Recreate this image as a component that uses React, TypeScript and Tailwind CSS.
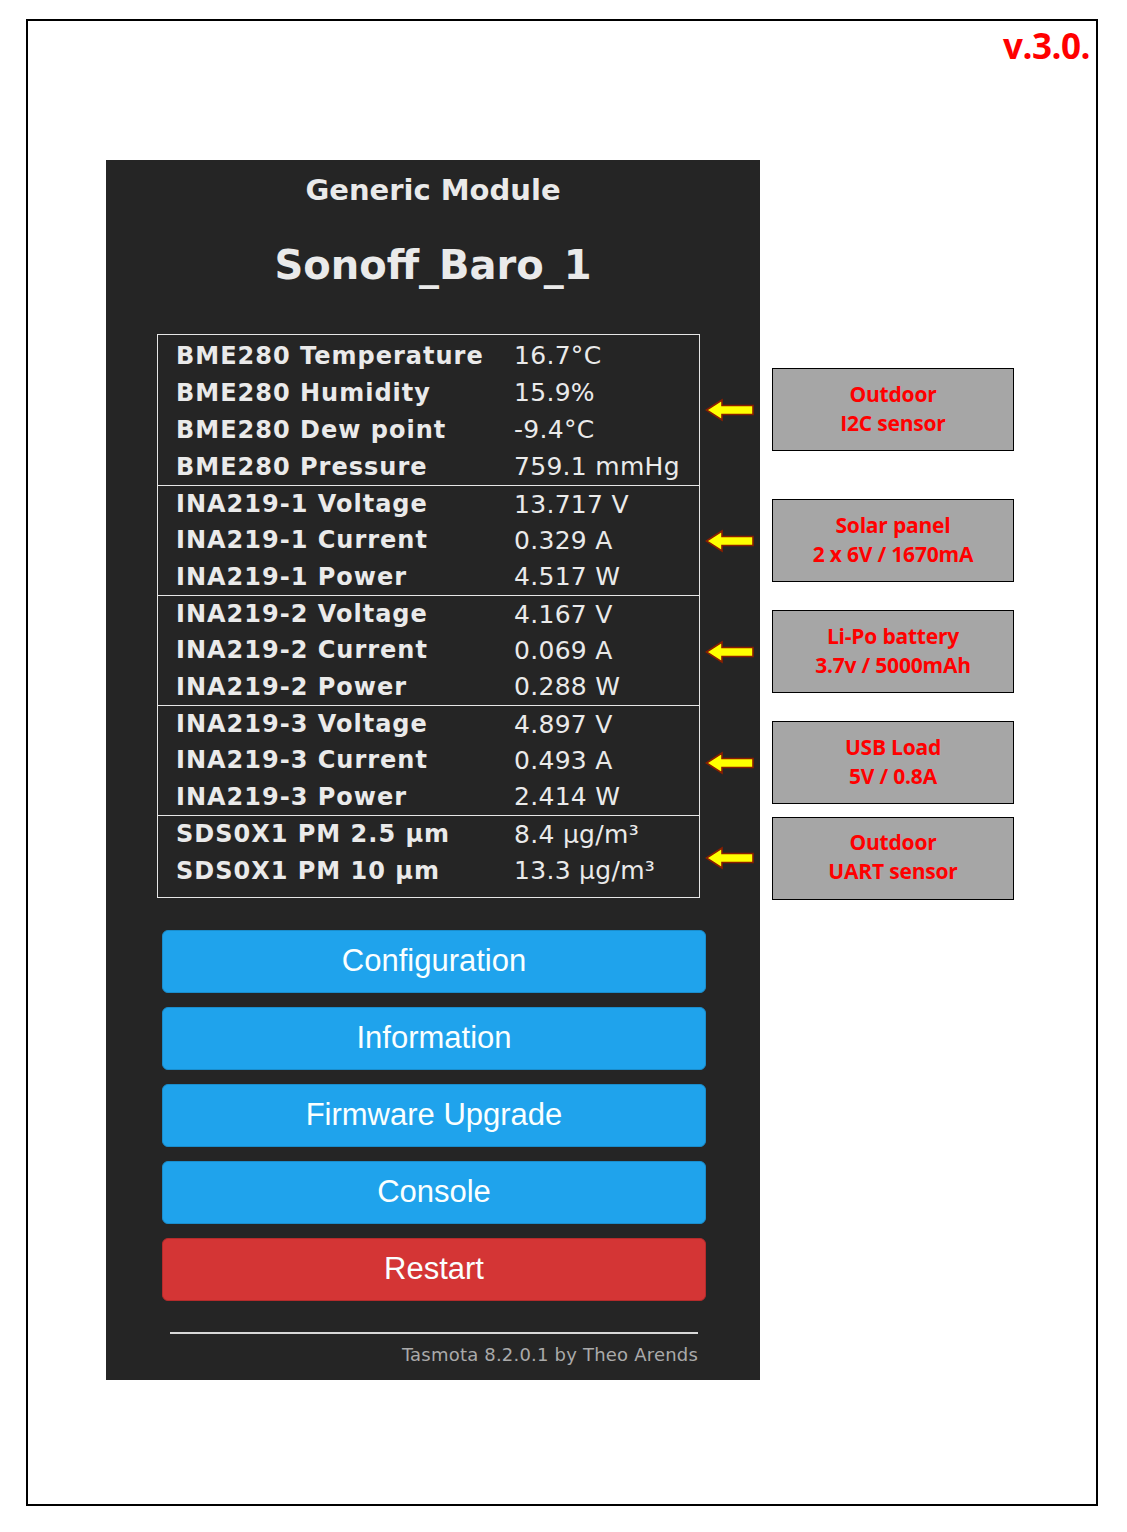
import React from "react";

type Row = [string, string];

const groups: { rows: Row[]; h: number; pad: string }[] = [
  {
    rows: [
      ["BME280 Temperature", "16.7°C"],
      ["BME280 Humidity", "15.9%"],
      ["BME280 Dew point", "-9.4°C"],
      ["BME280 Pressure", "759.1 mmHg"],
    ],
    h: 150,
    pad: "pt-[2px]",
  },
  {
    rows: [
      ["INA219-1 Voltage", "13.717 V"],
      ["INA219-1 Current", "0.329 A"],
      ["INA219-1 Power", "4.517 W"],
    ],
    h: 110,
    pad: "",
  },
  {
    rows: [
      ["INA219-2 Voltage", "4.167 V"],
      ["INA219-2 Current", "0.069 A"],
      ["INA219-2 Power", "0.288 W"],
    ],
    h: 110,
    pad: "",
  },
  {
    rows: [
      ["INA219-3 Voltage", "4.897 V"],
      ["INA219-3 Current", "0.493 A"],
      ["INA219-3 Power", "2.414 W"],
    ],
    h: 110,
    pad: "",
  },
  {
    rows: [
      ["SDS0X1 PM 2.5 µm", "8.4 µg/m³"],
      ["SDS0X1 PM 10 µm", "13.3 µg/m³"],
    ],
    h: 78,
    pad: "pb-[4px]",
  },
];

// slot heights for arrows / notes, matched to the table groups
const slots = [151, 111, 111, 111, 80];

const notes: [string, string][] = [
  ["Outdoor", "I2C sensor"],
  ["Solar panel", "2 x 6V / 1670mA"],
  ["Li-Po battery", "3.7v / 5000mAh"],
  ["USB Load", "5V / 0.8A"],
  ["Outdoor", "UART sensor"],
];

const buttons = [
  { label: "Configuration", red: false },
  { label: "Information", red: false },
  { label: "Firmware Upgrade", red: false },
  { label: "Console", red: false },
  { label: "Restart", red: true },
];

function Arrow() {
  return (
    <svg width="50" height="24" viewBox="0 0 50 24">
      <path
        d="M1.5 12 L17 2 L17 7.5 L48 7.5 L48 16.5 L17 16.5 L17 22 Z"
        fill="#ffff00"
        stroke="#8a1e00"
        strokeWidth="1.6"
        strokeLinejoin="miter"
      />
    </svg>
  );
}

export default function App() {
  return (
    <div className="w-[1127px] h-[1532px] bg-white pt-[19px] pl-[26px]">
      <div className="w-[1072px] h-[1487px] border-2 border-black flex flex-col">
        <div className="h-[139px] flex justify-end pr-[6px]">
          <span
            className="text-[35px] font-bold text-[#ff0000] leading-none mt-[7px] tracking-[-0.5px]"
            style={{ fontFamily: "'Open Sans', sans-serif" }}
          >
            v.3.0.
          </span>
        </div>

        <div className="flex">
          <div className="ml-[78px] w-[654px] h-[1220px] bg-[#252525] flex flex-col text-[#eaeaea]" style={{ fontFamily: "'DejaVu Sans', Verdana, sans-serif" }}>
            <div className="mt-[13px] text-center text-[29px] font-bold leading-[34px]">Generic Module</div>
            <div className="mt-[34px] text-center text-[40px] font-bold leading-[48px]">Sonoff_Baro_1</div>

            <div className="mt-[45px] flex">
              <div className="ml-[51px] w-[543px] border border-[#e6e6e6] flex flex-col">
                {groups.map((g, gi) => (
                  <div
                    key={gi}
                    className={`flex flex-col ${g.pad} ${gi > 0 ? "border-t border-[#e6e6e6]" : ""}`}
                    style={{ height: g.h }}
                  >
                    {g.rows.map(([label, value]) => (
                      <div key={label} className="flex-1 flex items-center pl-[18px] leading-none">
                        <span className="w-[338px] shrink-0 font-bold text-[24px] tracking-[1px] whitespace-nowrap">{label}</span>
                        <span className="text-[25px] tracking-[0.3px] whitespace-nowrap">{value}</span>
                      </div>
                    ))}
                  </div>
                ))}
              </div>
              <div className="ml-[5px] flex flex-col">
                {slots.map((h, i) => (
                  <div key={i} className="flex items-center" style={{ height: h }}>
                    <Arrow />
                  </div>
                ))}
              </div>
            </div>

            <div className="mt-[32px] ml-[56px] w-[544px] flex flex-col gap-[14px]">
              {buttons.map((b) => (
                <div
                  key={b.label}
                  className={`h-[63px] rounded-[6px] flex items-center justify-center text-[31px] text-[#faffff] ${
                    b.red ? "bg-[#d43535] border border-[#b52b2b]" : "bg-[#1fa3ec] border border-[#1a8dcc]"
                  }`}
                  style={{ fontFamily: "'Liberation Sans', Arial, sans-serif" }}
                >
                  {b.label}
                </div>
              ))}
            </div>

            <div className="mt-[31px] ml-[64px] w-[528px] h-[2px] bg-[#d8d8d8]" />
            <div className="ml-[64px] w-[528px] mt-[11px] text-right text-[18px] leading-[20px] tracking-[0.2px] text-[#aaaaaa]">
              Tasmota 8.2.0.1 by Theo Arends
            </div>
          </div>

          <div className="ml-[12px] pt-[174px] flex flex-col" style={{ fontFamily: "'Open Sans', sans-serif" }}>
            {slots.map((h, i) => (
              <div key={i} className="flex items-center" style={{ height: h }}>
                <div className="w-[242px] h-[83px] pb-[2px] bg-[#a6a6a6] border border-black flex flex-col items-center justify-center text-[21px] font-bold text-[#ff0000] leading-[29px] tracking-[-0.2px]">
                  <span>{notes[i][0]}</span>
                  <span>{notes[i][1]}</span>
                </div>
              </div>
            ))}
          </div>
        </div>
      </div>
    </div>
  );
}
